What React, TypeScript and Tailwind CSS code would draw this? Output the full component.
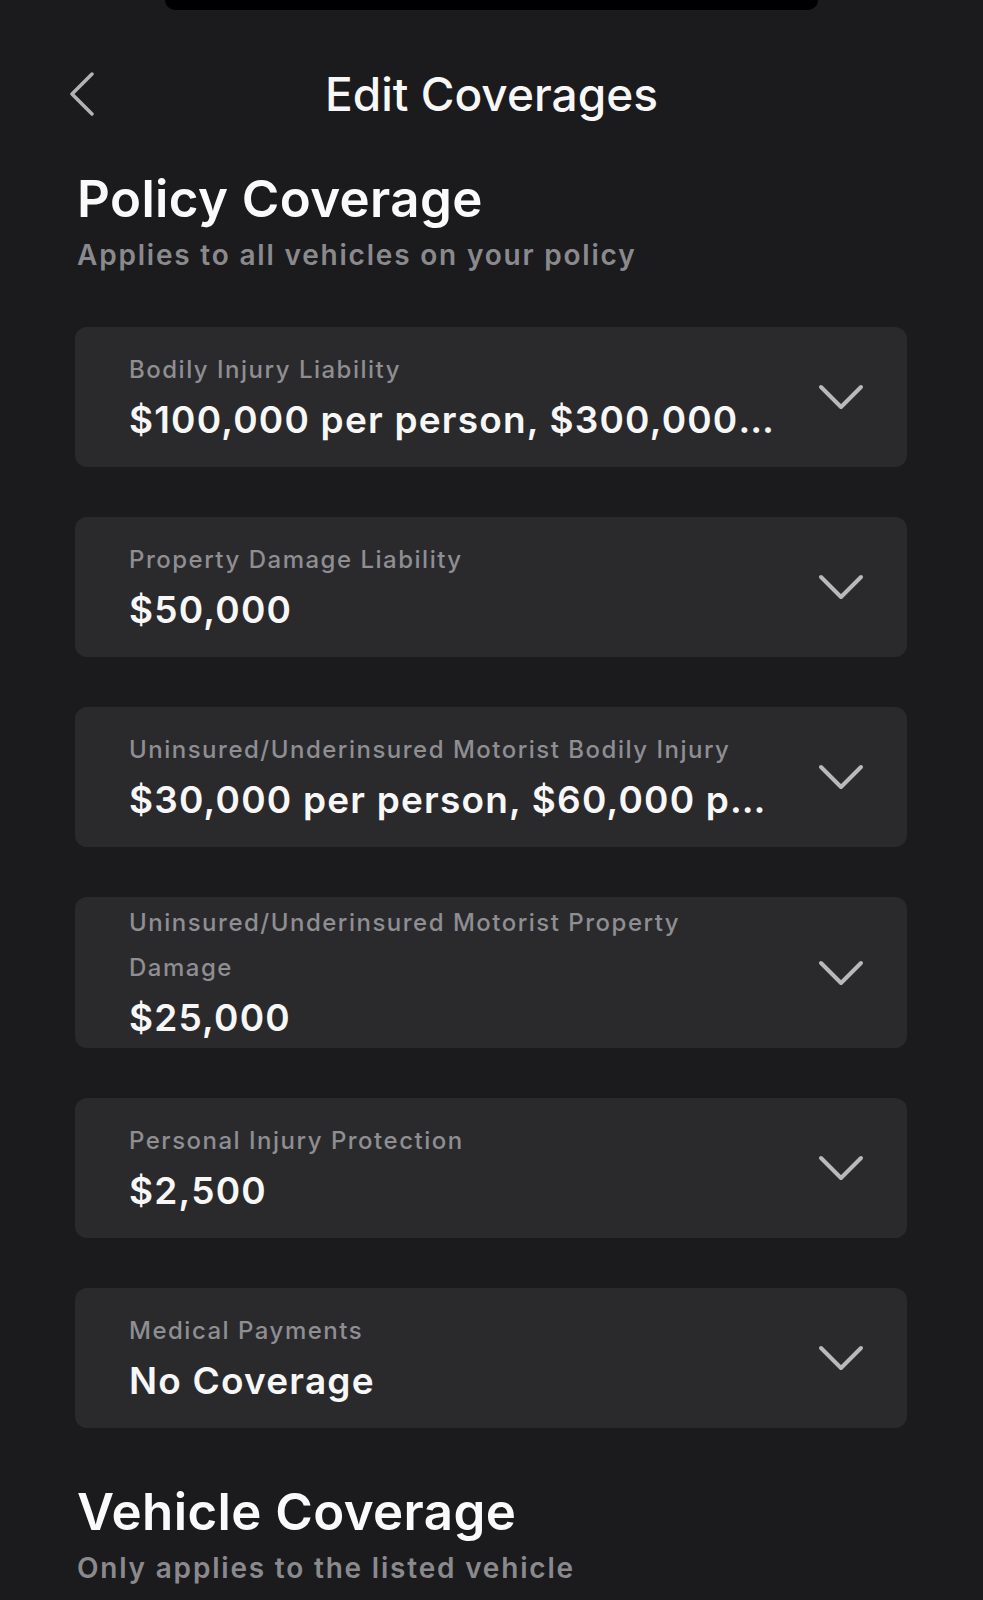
import React from "react";

const cards: { label: string; value: string; more?: boolean }[] = [
  { label: "Bodily Injury Liability", value: "$100,000 per person, $300,000", more: true },
  { label: "Property Damage Liability", value: "$50,000" },
  { label: "Uninsured/Underinsured Motorist Bodily Injury", value: "$30,000 per person, $60,000 p", more: true },
  { label: "Uninsured/Underinsured Motorist Property Damage", value: "$25,000" },
  { label: "Personal Injury Protection", value: "$2,500" },
  { label: "Medical Payments", value: "No Coverage" },
];

function Chevron() {
  return (
    <svg width="46" height="26" viewBox="0 0 46 26" fill="none" className="shrink-0">
      <path d="M3 3 L23 23 L43 3" stroke="#b9b9bb" strokeWidth="4" strokeLinecap="round" strokeLinejoin="round" />
    </svg>
  );
}

function Card({ label, value, more }: { label: string; value: string; more?: boolean }) {
  return (
    <div className="flex min-h-[140px] items-center rounded-[12px] bg-[#2a2a2d] py-[3px] pl-[54px] pr-[43px]">
      <div className="min-w-0 flex-1 pr-[44px]">
        <div className="text-[24px] font-medium leading-[45px] tracking-[1.5px] text-[#8e8e93]">{label}</div>
        <div className="whitespace-nowrap text-[37px] font-semibold leading-[55px] tracking-[1.2px] text-[#f7f7f7]">
          {value}
          {more && <span className="tracking-[-1px]">…</span>}
        </div>
      </div>
      <Chevron />
    </div>
  );
}

export default function App() {
  return (
    <div className="min-h-[1600px] bg-[#1b1b1d] font-['Inter','Liberation_Sans',sans-serif] text-white">
      <div className="mx-auto h-[10px] w-[653px] rounded-b-[22px] bg-black" />
      <div className="mt-[54px] grid h-[60px] grid-cols-[1fr_auto_1fr] items-center">
        <div className="pl-[68px]">
          <svg width="28" height="44" viewBox="0 0 28 44" fill="none">
            <path d="M24 2 L4 22 L24 42" stroke="#b3b3b5" strokeWidth="3.5" strokeLinecap="round" strokeLinejoin="round" />
          </svg>
        </div>
        <h1 className="text-[46px] font-medium leading-[60px] tracking-[0px] text-[#f7f7f7]">Edit Coverages</h1>
        <div />
      </div>

      <div className="px-[77px] pr-[76px]">
        <h2 className="mt-[45px] text-[51px] font-semibold leading-[60px] tracking-[0.4px] text-[#fafafa]">Policy Coverage</h2>
        <p className="mt-[8px] text-[28px] font-semibold leading-[36px] tracking-[1.8px] text-[#8a8a8e]">Applies to all vehicles on your policy</p>
      </div>

      <div className="mt-[54px] flex flex-col gap-[50px] pl-[75px] pr-[76px]">
        {cards.map((c) => (
          <Card key={c.label} label={c.label} value={c.value} more={c.more} />
        ))}
      </div>

      <div className="px-[77px]">
        <h2 className="mt-[54px] text-[51px] font-semibold leading-[60px] tracking-[0.4px] text-[#fafafa]">Vehicle Coverage</h2>
        <p className="mt-[8px] text-[28px] font-semibold leading-[36px] tracking-[1.8px] text-[#8a8a8e]">Only applies to the listed vehicle</p>
      </div>
    </div>
  );
}
